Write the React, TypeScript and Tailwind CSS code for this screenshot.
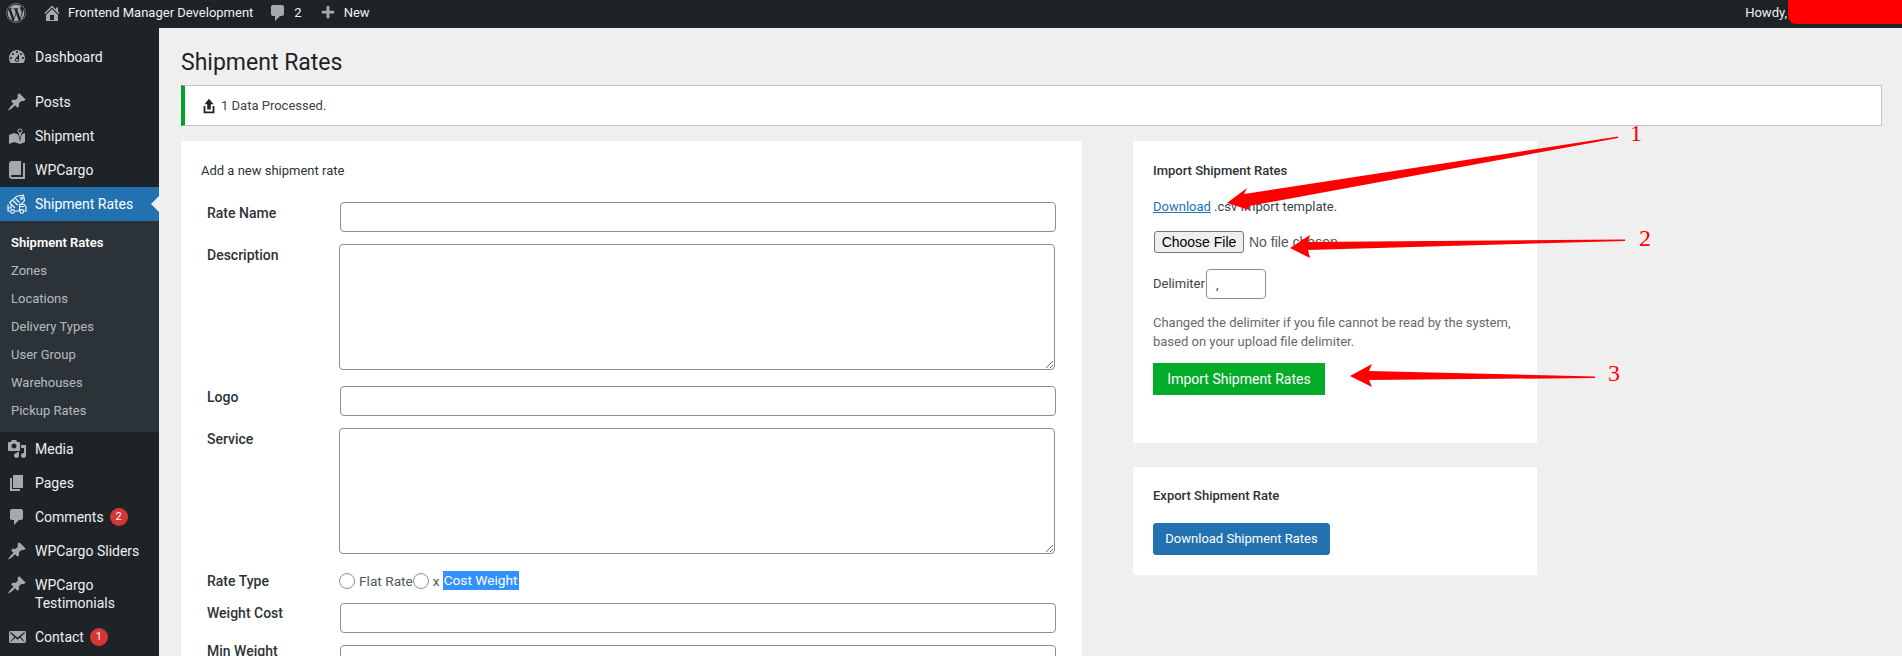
import React from "react";
import { FaWordpress } from "react-icons/fa";

const font = "font-['Roboto','Liberation_Sans',sans-serif]";

// dashicons style glyphs
const paths: Record<string, string> = {
  dashboard:
    "M3.76 16h12.48c1.1-1.37 1.76-3.11 1.76-5 0-4.42-3.58-8-8-8s-8 3.58-8 8c0 1.89.66 3.63 1.76 5zM10 4c.55 0 1 .45 1 1s-.45 1-1 1-1-.45-1-1 .45-1 1-1zM6 6c.55 0 1 .45 1 1s-.45 1-1 1-1-.45-1-1 .45-1 1-1zm8 0c.55 0 1 .45 1 1s-.45 1-1 1-1-.45-1-1 .45-1 1-1zm-5.37 5.55L12 7v6c0 1.1-.9 2-2 2s-2-.9-2-2c0-.57.24-1.08.63-1.45zM4 10c.55 0 1 .45 1 1s-.45 1-1 1-1-.45-1-1 .45-1 1-1zm12 0c.55 0 1 .45 1 1s-.45 1-1 1-1-.45-1-1 .45-1 1-1zm-5 3c0-.55-.45-1-1-1s-1 .45-1 1 .45 1 1 1 1-.45 1-1z",
  pin: "M10.44 3.02l1.82-1.82 6.36 6.35-1.83 1.82c-1.05-.68-2.48-.57-3.41.36l-.75.75c-.92.93-1.04 2.35-.35 3.41l-1.83 1.82-2.41-2.41-2.8 2.79c-.42.42-3.38 2.71-3.8 2.29s1.86-3.39 2.28-3.81l2.79-2.79L4.1 9.36l1.83-1.82c1.05.69 2.48.57 3.4-.36l.75-.75c.93-.92 1.05-2.35.36-3.41z",
  map: "M13 13.14l1.17-5.94c.79-.43 1.33-1.25 1.33-2.2 0-1.38-1.12-2.5-2.5-2.5S10.5 3.62 10.5 5c0 .95.54 1.77 1.33 2.2zm0-9.64c.83 0 1.5.67 1.5 1.5s-.67 1.5-1.5 1.5-1.5-.67-1.5-1.5.67-1.5 1.5-1.5zm1.72 4.8L18 6.97v9L13.12 18 7 15.97l-5 2v-9l5-2 4.27 1.41 1.73 7.3z",
  book: "M16 3h2v16H5c-1.66 0-3-1.34-3-3V4c0-1.66 1.34-3 3-3h9v14H5c-.55 0-1 .45-1 1s.45 1 1 1h11V3z",
  media:
    "M13 11V4c0-.55-.45-1-1-1h-1.67L9 1H5L3.67 3H2c-.55 0-1 .45-1 1v7c0 .55.45 1 1 1h10c.55 0 1-.45 1-1zM7 4.5c1.38 0 2.5 1.12 2.5 2.5S8.38 9.5 7 9.5 4.5 8.38 4.5 7 5.62 4.5 7 4.5zM14 6h5v10.5c0 1.38-1.12 2.5-2.5 2.5S14 17.88 14 16.5s1.12-2.5 2.5-2.5c.17 0 .34.02.5.05V9h-3V6zm-4 8.05V13h2v3.5c0 1.38-1.12 2.5-2.5 2.5S7 17.88 7 16.5 8.12 14 9.5 14c.17 0 .34.02.5.05z",
  page: "M6 15V2h10v13H6zm-1 1h8v2H3V5h2v11z",
  comment:
    "M5 2h9c1.1 0 2 .9 2 2v7c0 1.1-.9 2-2 2h-2l-5 5v-5H5c-1.1 0-2-.9-2-2V4c0-1.1.9-2 2-2z",
  mail: "M19 14.5v-9c0-.83-.67-1.5-1.5-1.5H3.49c-.83 0-1.5.67-1.5 1.5v9c0 .83.67 1.5 1.5 1.5H17.5c.83 0 1.5-.67 1.5-1.5zm-1.31-9.11c.33.33.15.67-.03.84L13.6 9.95l3.9 4.06c.12.14.2.36.06.51-.13.16-.43.15-.56.05l-4.37-3.73-2.14 1.95-2.13-1.95-4.37 3.73c-.13.1-.43.11-.56-.05-.14-.15-.06-.37.06-.51l3.9-4.06-4.06-3.72c-.18-.17-.36-.51-.03-.84s.67-.17.95.07l6.24 5.04 6.25-5.04c.28-.24.62-.4.95-.07z",
  home: "M16 8.5l1.53 1.53-1.06 1.06L10 4.62l-6.47 6.47-1.06-1.06L10 2.5l4 4v-2h2v4zm-6-2.46l6 5.99V18H4v-5.97zM12 17v-5H8v5h4z",
  plus: "M17 7v3h-5v5H9v-5H4V7h5V2h3v5h5z",
  upload: "M8 14V8H5l5-6 5 6h-3v6H8zm-2 2v-6H4v8h12.01v-8H14v6H6z",
};

const Glyph = ({ name, className }: { name: string; className: string }) => (
  <svg viewBox="0 0 20 20" fill="currentColor" className={className}>
    <path d={paths[name]} />
  </svg>
);

// truck with a price tag, plugin menu icon
const RatesIcon = () => (
  <svg viewBox="0 0 20 20" fill="none" stroke="currentColor" strokeWidth="1.1" className="w-5 h-5 text-white shrink-0">
    <path d="M2.5 8.5L10 2.2l6.5-1 1 5.5-4 4.3" />
    <path d="M2.5 8.5l5.5 5.5M6 6.5l4.5 4.5M8.5 4.5l4 4" />
    <circle cx="14.6" cy="4.2" r="1" />
    <path d="M1 10.5V17h2M8 17h4.5M1 14h3V11" />
    <path d="M16.5 17h2.5v-4l-2-2.8h-4.5V17" />
    <path d="M13 12.5h4" />
    <circle cx="5.5" cy="17.4" r="1.8" />
    <circle cx="14.8" cy="17.4" r="1.8" />
  </svg>
);

const Badge = ({ n }: { n: number }) => (
  <span className="ml-[6px] w-[18px] h-[18px] rounded-full bg-[#d63638] text-white text-[11px] leading-[18px] text-center">
    {n}
  </span>
);

const MenuItem = ({ icon, label, badge }: { icon: string; label: string; badge?: number }) => (
  <div className="flex px-[7px] py-2 text-[14px] leading-[18px] text-[#f0f0f1]">
    <Glyph name={icon} className="w-5 h-5 -my-px text-[#a7aaad] shrink-0" />
    <span className="ml-2 flex items-center">
      <span>{label}</span>
      {badge ? <Badge n={badge} /> : null}
    </span>
  </div>
);

const Sidebar = () => (
  <aside className="w-[159px] shrink-0 bg-[#1d2327] pt-3 h-full">
    <MenuItem icon="dashboard" label="Dashboard" />
    <div className="h-[11px]" />
    <MenuItem icon="pin" label="Posts" />
    <MenuItem icon="map" label="Shipment" />
    <MenuItem icon="book" label="WPCargo" />
    <div className="relative flex items-center h-[34px] px-[7px] bg-[#2271b1] text-white text-[14px]">
      <RatesIcon />
      <span className="ml-2">Shipment Rates</span>
      <span className="absolute right-0 top-[9px] border-y-8 border-r-8 border-y-transparent border-r-[#efefef]" />
    </div>
    <div className="bg-[#2c3338] pt-2 pb-[7px] text-[13px] text-[#f0f6fcb3]">
      <div className="h-7 pl-[11px] leading-7 font-semibold text-white">Shipment Rates</div>
      {["Zones", "Locations", "Delivery Types", "User Group", "Warehouses", "Pickup Rates"].map((s) => (
        <div key={s} className="h-7 pl-[11px] leading-7">
          {s}
        </div>
      ))}
    </div>
    <MenuItem icon="media" label="Media" />
    <MenuItem icon="page" label="Pages" />
    <MenuItem icon="comment" label="Comments" badge={2} />
    <MenuItem icon="pin" label="WPCargo Sliders" />
    <MenuItem icon="pin" label="WPCargo Testimonials" />
    <MenuItem icon="mail" label="Contact" badge={1} />
  </aside>
);

const AdminBar = () => (
  <header className="h-7 shrink-0 bg-[#1d2327] flex items-start justify-between text-[13px] text-[#f0f0f1]">
    <div className="flex items-center h-[26px]">
      <FaWordpress className="ml-[6px] w-5 h-5 text-[#a7aaad]" />
      <Glyph name="home" className="ml-[16px] w-5 h-5 text-[#a7aaad]" />
      <span className="ml-[6px]">Frontend Manager Development</span>
      <Glyph name="comment" className="ml-[15px] w-5 h-5 text-[#a7aaad]" />
      <span className="ml-[6px]">2</span>
      <Glyph name="plus" className="ml-4 w-[19px] h-[19px] text-[#a7aaad]" />
      <span className="ml-[7px]">New</span>
    </div>
    <div className="flex items-start">
      <span className="leading-[26px] mr-px">Howdy,</span>
      <div className="w-[114px] h-6 bg-[#ff0000] rounded-bl-lg" />
    </div>
  </header>
);

const FormRow = ({
  label,
  className,
  labelClass,
  children,
}: {
  label: string;
  className: string;
  labelClass: string;
  children: React.ReactNode;
}) => (
  <div className={`flex ${className}`}>
    <label className={`w-[133px] shrink-0 text-[14px] leading-[20px] font-medium text-[#2c3338] ${labelClass}`}>
      {label}
    </label>
    {children}
  </div>
);

const inputCls = "block w-[716px] h-[30px] border border-[#8c8f94] rounded-[4px] bg-white";

const RateForm = () => (
  <section className="w-[901px] shrink-0 bg-white h-[600px] pt-[22px]">
    <h2 className="pl-5 text-[13px] leading-4 text-[#2c3338]">Add a new shipment rate</h2>
    <div className="pl-[26px] pt-[23px]">
      <FormRow label="Rate Name" className="mb-3" labelClass="mt-[1px]">
        <input className={inputCls} />
      </FormRow>
      <FormRow label="Description" className="mb-4" labelClass="mt-[1px]">
        <textarea className="block w-[716px] h-[126px] border border-[#8c8f94] rounded-[4px] -ml-px" />
      </FormRow>
      <FormRow label="Logo" className="mb-3" labelClass="mt-px">
        <input className={inputCls} />
      </FormRow>
      <FormRow label="Service" className="mb-4" labelClass="mt-[1px]">
        <textarea className="block w-[716px] h-[126px] border border-[#8c8f94] rounded-[4px] -ml-px" />
      </FormRow>
      <FormRow label="Rate Type" className="mb-[11px] items-center h-[22px]" labelClass="">
        <div className="flex items-center -ml-px text-[13.7px] text-[#50575e]">
          <input type="radio" className="appearance-none w-4 h-4 rounded-full border border-[#8c8f94] bg-white" />
          <span className="ml-1">Flat Rate</span>
          <input type="radio" className="appearance-none w-4 h-4 rounded-full border border-[#8c8f94] bg-white" />
          <span className="ml-1">x</span>
          <span className="ml-[3px] block bg-[#3390ff] text-white leading-[19px] px-px">Cost Weight</span>
        </div>
      </FormRow>
      <FormRow label="Weight Cost" className="mb-3" labelClass="">
        <input className={inputCls} />
      </FormRow>
      <FormRow label="Min Weight" className="" labelClass="mt-[-4px]">
        <input className={inputCls} />
      </FormRow>
    </div>
  </section>
);

const SideCards = () => (
  <div className="w-[404px] shrink-0 ml-[51px] flex flex-col gap-6">
    <section className="h-[302px] bg-white pl-5 pr-4 pt-[22px] text-[13px] text-[#3c434a]">
      <h2 className="leading-4 font-medium text-[#2c3338]">Import Shipment Rates</h2>
      <p className="mt-[18px] leading-[19px]">
        <a className="text-[#2271b1] underline">Download</a> .csv Import template.
      </p>
      <input
        type="file"
        className="block mt-[15px] ml-px h-[22px] text-[14px] font-['Liberation_Sans',sans-serif] text-[#50575e] file:h-[22px] file:w-[90px] file:mr-[5px] file:px-0 file:border file:border-[#767676] file:rounded-[3px] file:bg-[#efefef] file:text-black file:text-[14px]"
      />
      <div className="mt-4 flex items-center">
        <span>Delimiter</span>
        <input
          defaultValue=","
          className={`ml-px w-[60px] h-[30px] border border-[#8c8f94] rounded-[4px] px-[9px] text-[13px] ${font}`}
        />
      </div>
      <p className="mt-[14px] leading-[19px] text-[#646970]">
        Changed the delimiter if you file cannot be read by the system, based on your upload file delimiter.
      </p>
      <button className="block mt-[12px] w-[172px] h-8 bg-[#02ab28] text-white text-[14px]">
        Import Shipment Rates
      </button>
    </section>
    <section className="h-[108px] bg-white pl-5 pt-[21px] text-[13px]">
      <h2 className="leading-4 font-medium text-[#2c3338]">Export Shipment Rate</h2>
      <button className="block mt-[19px] w-[177px] h-8 bg-[#2271b1] border border-[#2271b1] rounded-[3px] text-white text-[13px]">
        Download Shipment Rates
      </button>
    </section>
  </div>
);

// annotations drawn over the page
const Annotations = () => (
  <>
    <svg className="absolute left-0 top-0 pointer-events-none" width="1902" height="656" fill="#ff0000">
      <polygon points="1227,203 1247,188 1244,194 1618,136.5 1618,138 1249,206 1249,210" />
      <polygon points="1290,248 1310,235 1308,242 1625,239.5 1625,241 1308,250 1310,258" />
      <polygon points="1350,376 1372,364 1369,371 1595,376.5 1595,378 1369,380 1372,387" />
    </svg>
    <span className="absolute left-[1630px] top-[119px] text-[24px] leading-7 text-[#ff0000] font-['Liberation_Serif',serif]">1</span>
    <span className="absolute left-[1639px] top-[224px] text-[24px] leading-7 text-[#ff0000] font-['Liberation_Serif',serif]">2</span>
    <span className="absolute left-[1608px] top-[359px] text-[24px] leading-7 text-[#ff0000] font-['Liberation_Serif',serif]">3</span>
  </>
);

export default function App() {
  return (
    <div className={`relative w-[1902px] h-[656px] overflow-hidden flex flex-col bg-[#efefef] ${font}`}>
      <AdminBar />
      <div className="flex flex-1 min-h-0">
        <Sidebar />
        <main className="flex-1 pl-[22px] pr-5 min-w-0">
          <h1 className="mt-5 h-[37px] text-[23px] leading-[30px] text-[#1d2327]">Shipment Rates</h1>
          <div className="h-[41px] border border-[#c3c4c7] border-l-4 border-l-[#00a32a] bg-white flex items-center pl-[17px] text-[13px] text-[#3c434a]">
            <Glyph name="upload" className="w-[18px] h-[18px] text-[#1d2327] -ml-[2px]" />
            <span className="ml-[3px]">1 Data Processed.</span>
          </div>
          <div className="flex mt-[15px]">
            <RateForm />
            <SideCards />
          </div>
        </main>
      </div>
      <Annotations />
    </div>
  );
}
